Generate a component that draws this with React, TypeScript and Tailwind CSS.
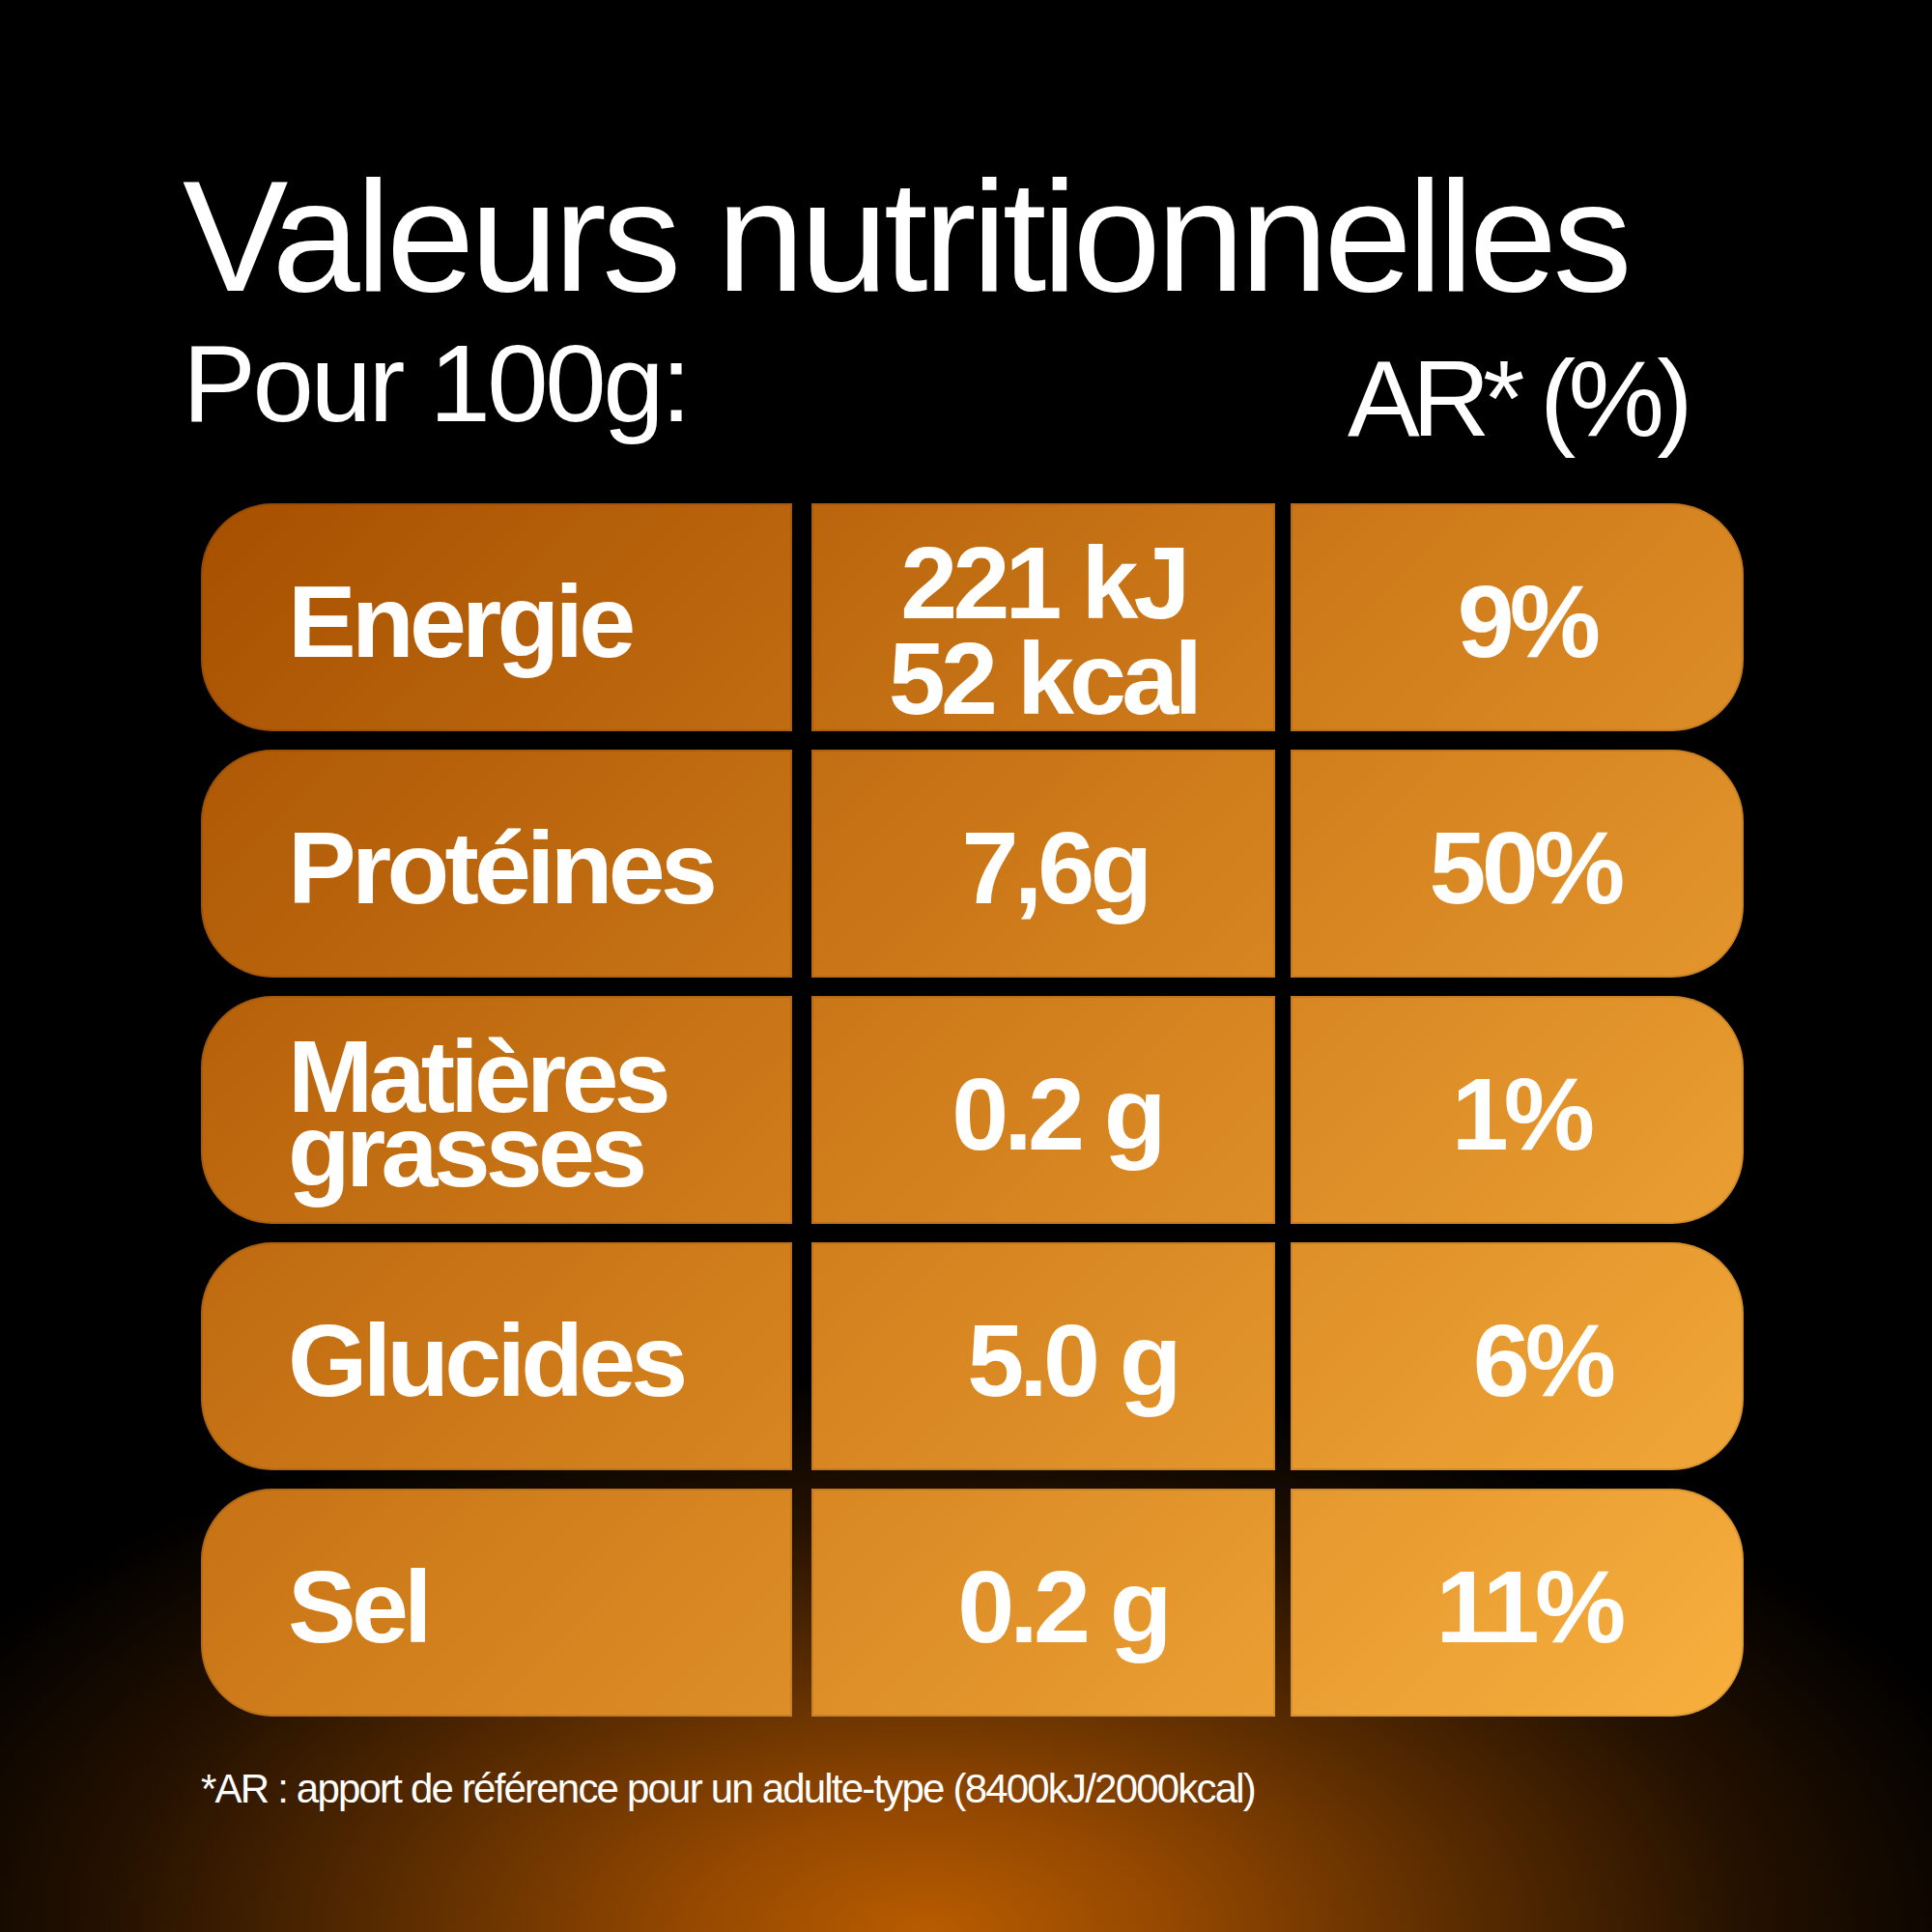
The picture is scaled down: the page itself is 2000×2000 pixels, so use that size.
const rows = [
  { label: ["Energie"], value: ["221 kJ", "52 kcal"], valuePad: "pl-0 pt-[28px]", ar: "9%", arPad: "pl-[20px]" },
  { label: ["Protéines"], value: ["7,6g"], valuePad: "pl-[24px] pt-[8px]", ar: "50%", arPad: "pl-[16px]" },
  { label: ["Matières", "grasses"], value: ["0.2 g"], valuePad: "pl-[28px] pt-[8px]", ar: "1%", arPad: "pl-[8px]" },
  { label: ["Glucides"], value: ["5.0 g"], valuePad: "pl-[60px] pt-[8px]", ar: "6%", arPad: "pl-[52px]" },
  { label: ["Sel"], value: ["0.2 g"], valuePad: "pl-[40px] pt-[8px]", ar: "11%", arPad: "pl-[24px]" },
];

// one gradient for the whole table, pinned to the viewport so every cell picks up its own slice
const cellBg =
  "bg-fixed bg-[linear-gradient(135deg,#a65000_18%,#d07d1c_52%,#f8b03e_90%)] border-2 border-black/10";

export default function App() {
  return (
    <main className="w-[2000px] h-[2000px] overflow-hidden bg-black bg-[radial-gradient(ellipse_1150px_580px_at_48%_100%,#b85c00_0%,#944800_22%,#5a2c00_48%,#241100_74%,#000_100%)] text-white font-['Liberation_Sans',Arial,sans-serif]">
      {/* Header */}
      <div className="h-[521px] pl-[189px] pt-[163px]">
        <h1 className="text-[164px] leading-none tracking-[-0.028em] font-normal">Valeurs nutritionnelles</h1>
        <div className="flex items-start mt-[13px]">
          <p className="w-[1206px] text-[114px] leading-none tracking-[-0.03em]">Pour 100g:</p>
          <p className="mt-[17px] text-[112px] leading-none tracking-[-0.07em]">AR* (%)</p>
        </div>
      </div>

      {/* Table */}
      <div className="pl-[208px] flex flex-col gap-[19px]">
        {rows.map((r, i) => (
          <div key={i} className="flex h-[236px] font-bold text-[106px] leading-none tracking-[-0.045em]">
            <div className={`${cellBg} w-[612px] rounded-l-[74px] flex flex-col justify-center pl-[88px] pt-[8px]`}>
              {r.label.map((l) => (
                <span key={l} className={r.label.length > 1 ? "leading-[0.73]" : ""}>{l}</span>
              ))}
            </div>
            <div className={`${cellBg} ml-[20px] w-[480px] flex flex-col items-center justify-center ${r.valuePad}`}>
              {r.value.map((v) => (
                <span key={v} className={r.value.length > 1 ? "leading-[0.93]" : ""}>{v}</span>
              ))}
            </div>
            <div className={`${cellBg} ml-[16px] w-[469px] rounded-r-[74px] flex items-center justify-center pt-[8px] ${r.arPad}`}>
              <span>{r.ar}</span>
            </div>
          </div>
        ))}
      </div>

      {/* Footnote */}
      <p className="pl-[208px] mt-[54px] text-[42px] leading-none tracking-[-0.043em]">
        *AR : apport de référence pour un adulte-type (8400kJ/2000kcal)
      </p>
    </main>
  );
}
